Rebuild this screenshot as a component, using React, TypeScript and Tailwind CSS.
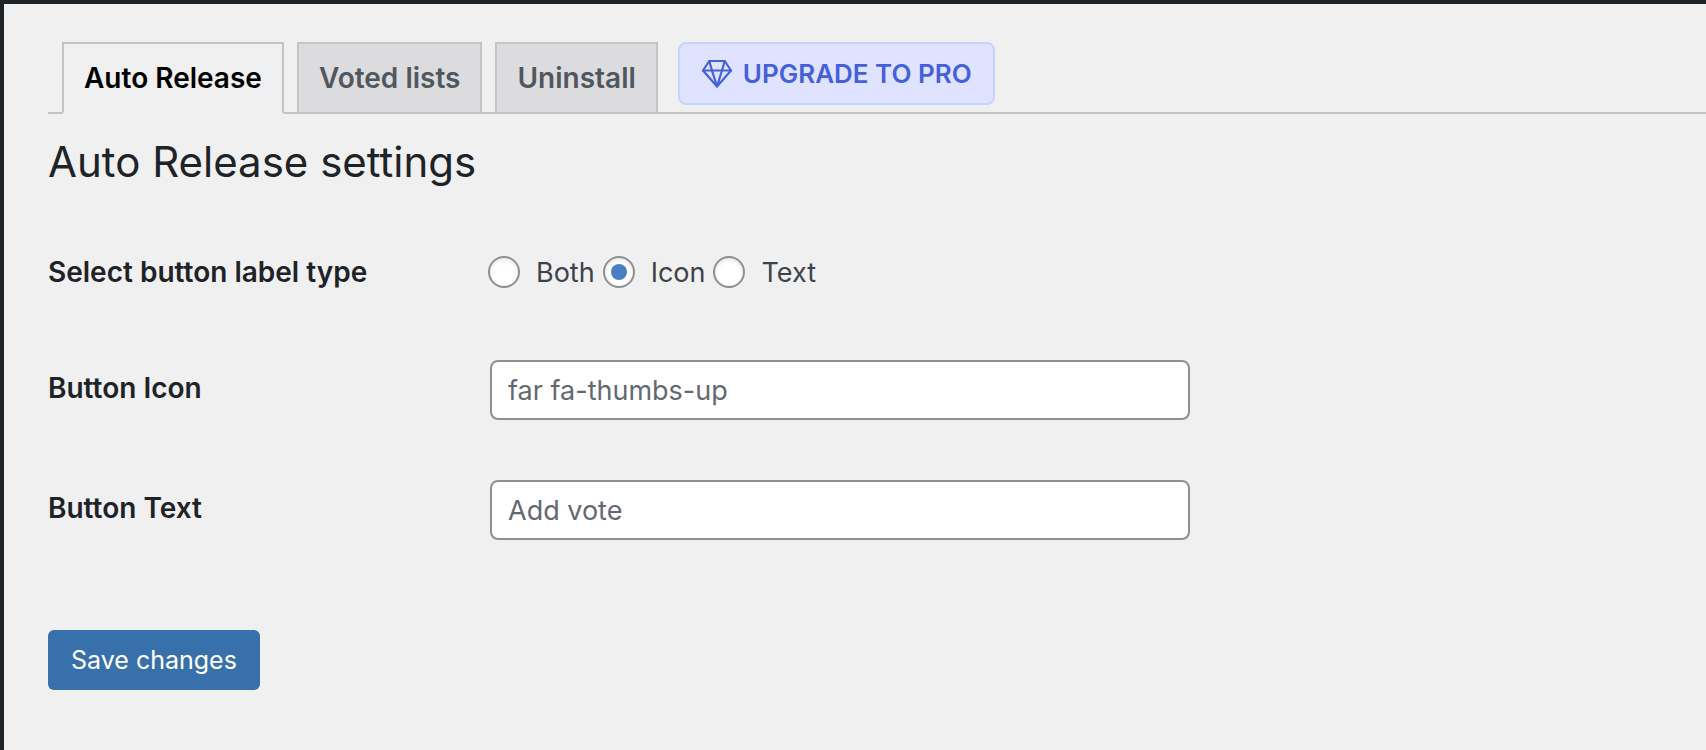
import { useState } from "react";

const tabs = [
  { label: "Auto Release", active: true },
  { label: "Voted lists", active: false },
  { label: "Uninstall", active: false },
];

const labelTypes = ["Both", "Icon", "Text"];

function GemIcon() {
  return (
    <svg
      className="h-8 w-8 shrink-0"
      viewBox="0 0 32 32"
      fill="none"
      stroke="currentColor"
      strokeWidth="2.2"
      strokeLinejoin="round"
      strokeLinecap="round"
      aria-hidden="true"
    >
      <path d="M8.3 3h15.4L30 12.5 16 28.5 2 12.5z" />
      <path d="M2 12.5h28" />
      <path d="M8.3 3 11 12.5 16 28.5 21 12.5 23.7 3" />
    </svg>
  );
}

function Tabs() {
  return (
    <nav className="flex items-start border-b-2 border-[#c3c4c7] pl-[14px]">
      {tabs.map((tab) => (
        <a
          key={tab.label}
          href="#"
          aria-current={tab.active ? "page" : undefined}
          className={
            tab.active
              ? "-mb-[2px] mr-[13px] border-2 border-[#c3c4c7] border-b-[#f0f0f0] bg-[#f0f0f0] px-5 py-[10px] text-[28px] leading-[48px] font-semibold text-black"
              : "mr-[13px] border-2 border-b-0 border-[#c3c4c7] bg-[#dcdcde] px-5 py-[10px] text-[28px] leading-[48px] font-semibold text-[#50575e]"
          }
        >
          {tab.label}
        </a>
      ))}
      <a
        href="#"
        className="ml-[7px] flex items-center gap-[10px] rounded-lg border-2 border-[#c7d2fe] bg-[#e0e3ff] px-[21px] py-[10px] text-[26px] leading-[39px] font-semibold text-[#4560d8]"
      >
        <GemIcon />
        UPGRADE TO PRO
      </a>
    </nav>
  );
}

function TextRow({ id, label, placeholder }: { id: string; label: string; placeholder: string }) {
  return (
    <div className="flex items-center">
      <label htmlFor={id} className="w-[442px] shrink-0 pb-1 text-[28px] leading-9 font-semibold">
        {label}
      </label>
      <input
        id={id}
        type="text"
        placeholder={placeholder}
        className="h-[60px] w-full max-w-[700px] rounded-lg border-2 border-[#8c8f94] bg-white px-4 text-[27px] text-[#2c3338] outline-none placeholder:text-[#646970]"
      />
    </div>
  );
}

export default function App() {
  const [labelType, setLabelType] = useState("Icon");

  return (
    <div className="min-h-screen border-t-4 border-l-4 border-[#1d2327] bg-[#f0f0f0] pt-[38px] pl-11 font-['Inter','Liberation_Sans',sans-serif] text-[#1d2327]">
      <Tabs />
      <main>
        <h1 className="pt-5 text-[42px] leading-[56px] font-normal">Auto Release settings</h1>
        <form onSubmit={(event) => event.preventDefault()}>
          <div role="radiogroup" aria-labelledby="label-type-heading" className="flex items-center pt-16">
            <span id="label-type-heading" className="w-[440px] shrink-0 text-[28px] leading-9 font-semibold">
              Select button label type
            </span>
            <div className="flex items-center gap-2">
              {labelTypes.map((type) => (
                <label key={type} className="flex items-center gap-4 text-[27px] leading-8 text-[#3c434a]">
                  <input
                    type="radio"
                    name="label-type"
                    value={type}
                    checked={labelType === type}
                    onChange={() => setLabelType(type)}
                    className="grid h-8 w-8 shrink-0 appearance-none place-items-center rounded-full border-2 border-[#8c8f94] bg-white shadow-[inset_0_2px_4px_rgba(0,0,0,0.1)] before:h-4 before:w-4 before:rounded-full checked:before:bg-[#4680c2]"
                  />
                  <span className="-mb-[2px]">{type}</span>
                </label>
              ))}
            </div>
          </div>
          <div className="flex flex-col gap-[60px] pt-[70px]">
            <TextRow id="button-icon" label="Button Icon" placeholder="far fa-thumbs-up" />
            <TextRow id="button-text" label="Button Text" placeholder="Add vote" />
          </div>
          <button
            type="submit"
            className="mt-[90px] h-[60px] rounded-md bg-[#3870ab] px-[23px] pt-[2px] text-[25px] text-white"
          >
            Save changes
          </button>
        </form>
      </main>
    </div>
  );
}
